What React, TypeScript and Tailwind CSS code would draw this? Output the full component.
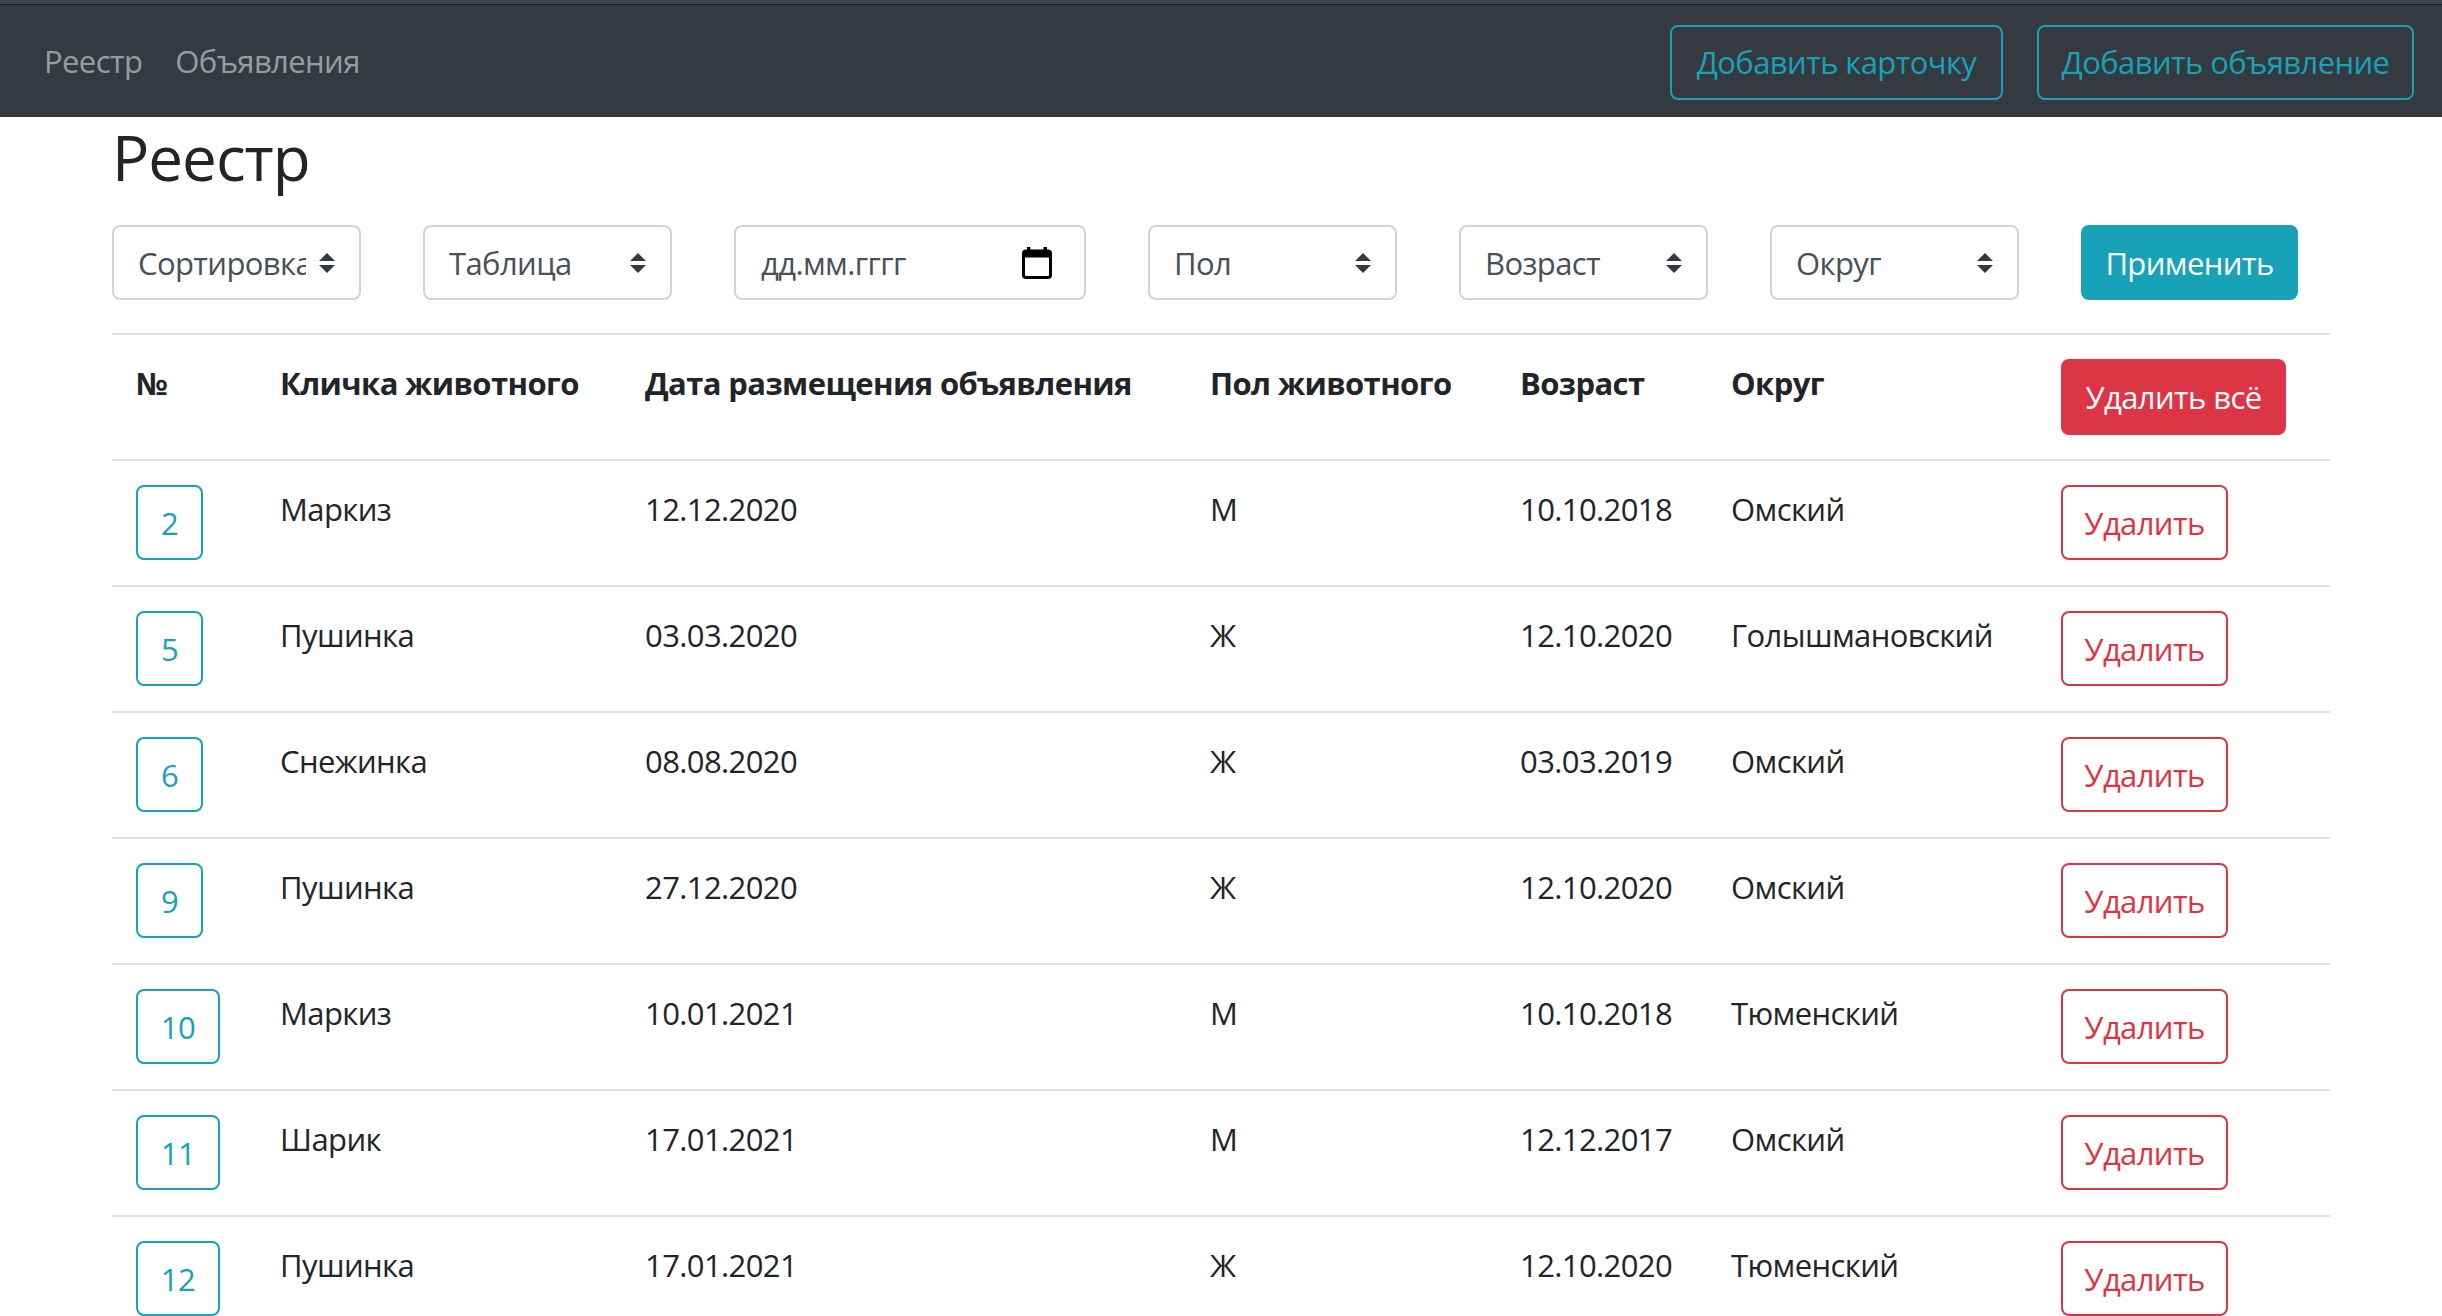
import React from "react";

const rows = [
  { id: 2, name: "Маркиз", date: "12.12.2020", sex: "М", age: "10.10.2018", district: "Омский" },
  { id: 5, name: "Пушинка", date: "03.03.2020", sex: "Ж", age: "12.10.2020", district: "Голышмановский" },
  { id: 6, name: "Снежинка", date: "08.08.2020", sex: "Ж", age: "03.03.2019", district: "Омский" },
  { id: 9, name: "Пушинка", date: "27.12.2020", sex: "Ж", age: "12.10.2020", district: "Омский" },
  { id: 10, name: "Маркиз", date: "10.01.2021", sex: "М", age: "10.10.2018", district: "Тюменский" },
  { id: 11, name: "Шарик", date: "17.01.2021", sex: "М", age: "12.12.2017", district: "Омский" },
  { id: 12, name: "Пушинка", date: "17.01.2021", sex: "Ж", age: "12.10.2020", district: "Тюменский" },
];

const cols = "grid grid-cols-[144px_365px_565px_310px_211px_330px_293px]";

function SelectArrows() {
  return (
    <svg width="16" height="20" viewBox="0 0 4 5" className="shrink-0">
      <path d="M2 0L0 2h4zm0 5L0 3h4z" fill="#343a40" />
    </svg>
  );
}

function FakeSelect({ label }: { label: string }) {
  return (
    <div className="flex h-[75px] w-[249px] shrink-0 items-center justify-between rounded-[8px] border-2 border-[#ced4da] bg-white pl-[24px] pr-[24px]">
      <span className="w-[168px] overflow-hidden whitespace-nowrap leading-[48px] text-[#495057]">{label}</span>
      <SelectArrows />
    </div>
  );
}

function CalendarIcon() {
  return (
    <svg width="30" height="32" viewBox="0 0 30 32" className="shrink-0">
      <rect x="5" y="0" width="3.5" height="6" fill="#000" />
      <rect x="21.5" y="0" width="3.5" height="6" fill="#000" />
      <rect x="1.5" y="4" width="27" height="26.5" rx="2.5" fill="none" stroke="#000" strokeWidth="3" />
      <rect x="1.5" y="4" width="27" height="6.5" fill="#000" />
    </svg>
  );
}

export default function App() {
  return (
    <div className="min-h-screen bg-white font-['Open_Sans','Noto_Sans',sans-serif] text-[31px] leading-[48px] tracking-[-0.6px] text-[#212529]">
      {/* Navbar */}
      <div className="h-[4px] bg-[#3c4551]" />
      <div className="h-px bg-[#1d2024]" />
      <nav className="flex h-[112px] items-center justify-between bg-[#343a40] pl-[44px] pr-[28px]">
        <div className="flex items-center gap-[33px] text-[rgba(255,255,255,0.5)]">
          <a>Реестр</a>
          <a>Объявления</a>
        </div>
        <div className="flex items-center gap-[34px] pt-[2px]">
          <button className="h-[75px] w-[333px] rounded-[8px] border-2 border-[#17a2b8] text-[#17a2b8]">
            Добавить карточку
          </button>
          <button className="h-[75px] w-[377px] rounded-[8px] border-2 border-[#17a2b8] text-[#17a2b8]">
            Добавить объявление
          </button>
        </div>
      </nav>

      <main className="px-[112px]">
        <h2 className="mt-[2px] text-[62px] font-medium leading-[77px] tracking-[-1px]">Реестр</h2>

        {/* Filters */}
        <div className="mt-[29px] flex items-center gap-[62px]">
          <FakeSelect label="Сортировка" />
          <FakeSelect label="Таблица" />
          <div className="flex h-[75px] w-[352px] shrink-0 items-center justify-between rounded-[8px] border-2 border-[#ced4da] pl-[25px] pr-[32px]">
            <span className="text-[#495057]">дд.мм.гггг</span>
            <CalendarIcon />
          </div>
          <FakeSelect label="Пол" />
          <FakeSelect label="Возраст" />
          <FakeSelect label="Округ" />
          <button className="h-[75px] w-[217px] shrink-0 rounded-[8px] bg-[#17a2b8] text-white">Применить</button>
        </div>

        {/* Table */}
        <div className="mt-[33px]">
          <div className={`${cols} h-[126px] border-t-2 border-[#dee2e6] whitespace-nowrap font-bold`}>
            <div className="px-[24px] pt-[24px]">№</div>
            <div className="px-[24px] pt-[24px]">Кличка животного</div>
            <div className="px-[24px] pt-[24px]">Дата размещения объявления</div>
            <div className="px-[24px] pt-[24px]">Пол животного</div>
            <div className="px-[24px] pt-[24px]">Возраст</div>
            <div className="px-[24px] pt-[24px]">Округ</div>
            <div className="px-[24px] pt-[24px]">
              <button className="h-[76px] w-[225px] rounded-[8px] bg-[#dc3545] font-normal text-white">Удалить всё</button>
            </div>
          </div>

          {rows.map((r) => (
            <div key={r.id} className={`${cols} h-[126px] border-t-2 border-[#dee2e6]`}>
              <div className="px-[24px] pt-[24px]">
                <button
                  className={`h-[75px] rounded-[8px] border-2 border-[#17a2b8] text-[#17a2b8] ${
                    r.id < 10 ? "w-[67px]" : "w-[84px]"
                  }`}
                >
                  {r.id}
                </button>
              </div>
              <div className="px-[24px] pt-[24px]">{r.name}</div>
              <div className="px-[24px] pt-[24px]">{r.date}</div>
              <div className="px-[24px] pt-[24px]">{r.sex}</div>
              <div className="px-[24px] pt-[24px]">{r.age}</div>
              <div className="whitespace-nowrap px-[24px] pt-[24px]">{r.district}</div>
              <div className="px-[24px] pt-[24px]">
                <button className="h-[75px] w-[167px] rounded-[8px] border-2 border-[#dc3545] text-[#dc3545]">Удалить</button>
              </div>
            </div>
          ))}
        </div>
      </main>
    </div>
  );
}
